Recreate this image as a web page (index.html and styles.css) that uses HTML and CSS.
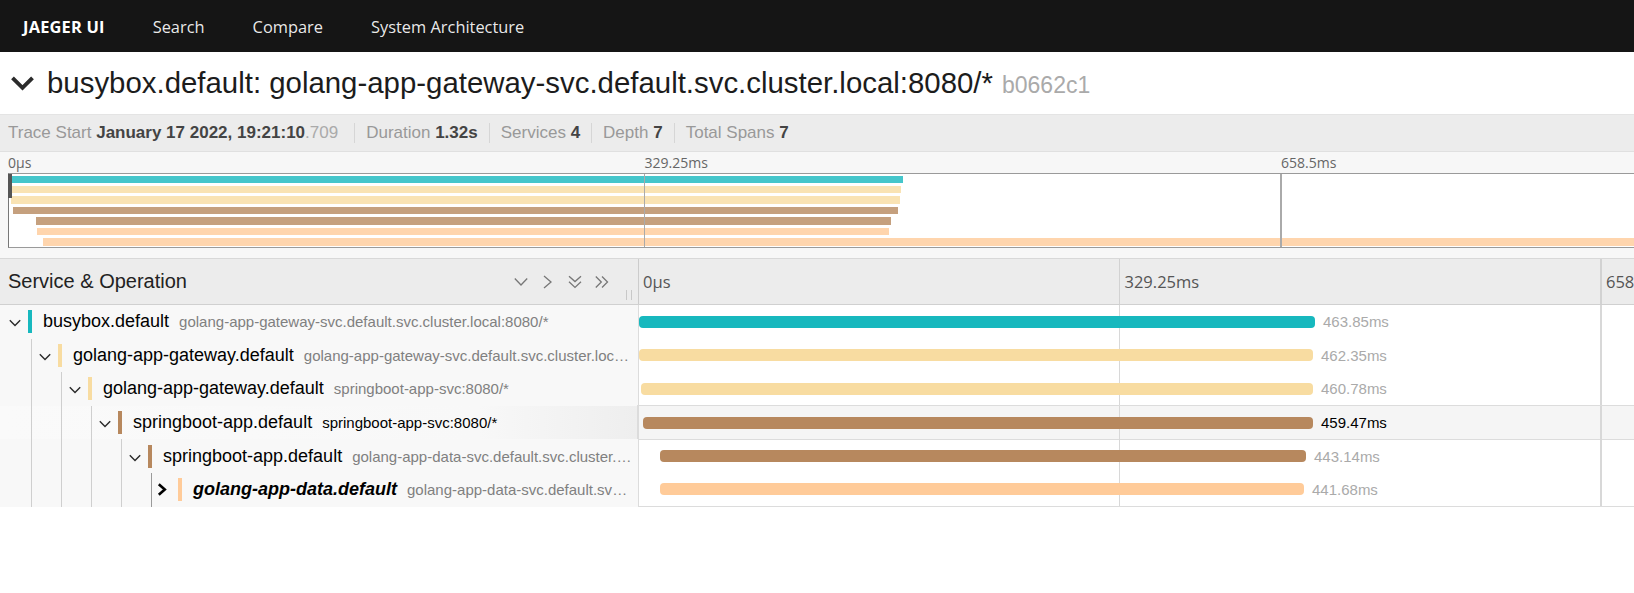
FILE: index.html
```html
<!DOCTYPE html>
<html lang="en">
<head>
<meta charset="utf-8">
<title>Jaeger UI</title>
<link rel="stylesheet" href="styles.css">
</head>
<body>
<nav class="topnav">
  <a class="brand">JAEGER UI</a>
  <a class="navlink">Search</a>
  <a class="navlink">Compare</a>
  <a class="navlink">System Architecture</a>
</nav>

<header class="trace-header">
  <div class="title-row">
    <svg class="title-toggle" width="25" height="17" viewBox="0 0 25 17"><path d="M2.5 2.8 L12.5 12.8 L22.5 2.8" fill="none" stroke="#2b2b2b" stroke-width="3.9"/></svg>
    <h1 class="trace-title">busybox.default: golang-app-gateway-svc.default.svc.cluster.local:8080/*<small class="trace-id">b0662c1</small></h1>
  </div>
  <ul class="overview">
    <li class="ov-item"><span class="ov-label">Trace Start</span> <strong class="ov-value">January 17 2022, 19:21:10</strong><span class="ov-ms">.709</span></li>
    <li class="ov-item"><span class="ov-label">Duration</span> <strong class="ov-value">1.32s</strong></li>
    <li class="ov-item"><span class="ov-label">Services</span> <strong class="ov-value">4</strong></li>
    <li class="ov-item"><span class="ov-label">Depth</span> <strong class="ov-value">7</strong></li>
    <li class="ov-item"><span class="ov-label">Total Spans</span> <strong class="ov-value">7</strong></li>
  </ul>
</header>

<section class="minimap">
  <div class="mm-ticks">
    <span class="mm-tick">0μs</span>
    <span class="mm-tick">329.25ms</span>
    <span class="mm-tick">658.5ms</span>
    <span class="mm-tick">987.75ms</span>
  </div>
  <div class="mm-canvas">
    <div class="mm-handle"></div>
    <div class="mm-row"><div class="mm-bar k-teal" style="margin-left:0px;width:894px"></div></div>
    <div class="mm-row"><div class="mm-bar k-yellow" style="margin-left:0px;width:892px"></div></div>
    <div class="mm-row"><div class="mm-bar k-yellow" style="margin-left:2px;width:889px"></div></div>
    <div class="mm-row"><div class="mm-bar k-brown" style="margin-left:4px;width:885px"></div></div>
    <div class="mm-row"><div class="mm-bar k-brown" style="margin-left:26.7px;width:855.7px"></div></div>
    <div class="mm-row"><div class="mm-bar k-peach" style="margin-left:28.1px;width:851.9px"></div></div>
    <div class="mm-row"><div class="mm-bar k-peach" style="margin-left:33.9px;width:2500px"></div></div>
  </div>
</section>

<section class="detail">
  <div class="detail-header">
    <div class="hdr-name">
      <h3 class="hdr-title">Service &amp; Operation</h3>
      <div class="hdr-tools">
        <svg class="tool" width="14" height="14" viewBox="0 0 14 14"><path d="M0.8 3.5 L7 10 L13.2 3.5"/></svg>
        <svg class="tool" width="14" height="14" viewBox="0 0 14 14"><path d="M3 1 L10 7 L3 13"/></svg>
        <svg class="tool" width="14" height="14" viewBox="0 0 14 14"><path d="M1 1.2 L7 6.6 L13 1.2 M1 6.8 L7 12.4 L13 6.8"/></svg>
        <svg class="tool" width="14" height="14" viewBox="0 0 14 14"><path d="M0.8 1.5 L6.3 7 L0.8 12.5 M7 1.5 L12.5 7 L7 12.5"/></svg>
      </div>
      <span class="hdr-resizer"></span>
    </div>
    <div class="hdr-ticks">
      <span class="hdr-tick">0μs</span>
      <span class="hdr-tick">329.25ms</span>
      <span class="hdr-tick">658.5ms</span>
      <span class="hdr-tick">987.75ms</span>
    </div>
  </div>

  <div class="rows">
    <div class="row k-teal">
      <div class="name-cell">
        <span class="toggle"><svg class="chev" width="12" height="8" viewBox="0 0 12 8"><path d="M0.8 1.2 L6 6.6 L11.2 1.2"/></svg></span>
        <span class="span-name"><span class="svc">busybox.default</span>golang-app-gateway-svc.default.svc.cluster.local:8080/*</span>
      </div>
      <div class="span-view"><span class="bar" style="margin-left:0px;width:676px"></span><span class="bar-label">463.85ms</span></div>
    </div>

    <div class="row k-yellow">
      <div class="name-cell">
        <span class="guide"></span>
        <span class="toggle"><svg class="chev" width="12" height="8" viewBox="0 0 12 8"><path d="M0.8 1.2 L6 6.6 L11.2 1.2"/></svg></span>
        <span class="span-name"><span class="svc">golang-app-gateway.default</span>golang-app-gateway-svc.default.svc.cluster.local:8080/*</span>
      </div>
      <div class="span-view"><span class="bar" style="margin-left:0px;width:674px"></span><span class="bar-label">462.35ms</span></div>
    </div>

    <div class="row k-yellow">
      <div class="name-cell">
        <span class="guide"></span><span class="guide"></span>
        <span class="toggle"><svg class="chev" width="12" height="8" viewBox="0 0 12 8"><path d="M0.8 1.2 L6 6.6 L11.2 1.2"/></svg></span>
        <span class="span-name"><span class="svc">golang-app-gateway.default</span>springboot-app-svc:8080/*</span>
      </div>
      <div class="span-view"><span class="bar" style="margin-left:2px;width:672px"></span><span class="bar-label">460.78ms</span></div>
    </div>

    <div class="row k-brown is-hovered">
      <div class="name-cell">
        <span class="guide"></span><span class="guide"></span><span class="guide"></span>
        <span class="toggle"><svg class="chev" width="12" height="8" viewBox="0 0 12 8"><path d="M0.8 1.2 L6 6.6 L11.2 1.2"/></svg></span>
        <span class="span-name"><span class="svc">springboot-app.default</span>springboot-app-svc:8080/*</span>
      </div>
      <div class="span-view"><span class="bar" style="margin-left:4px;width:670px"></span><span class="bar-label">459.47ms</span></div>
    </div>

    <div class="row k-brown">
      <div class="name-cell">
        <span class="guide"></span><span class="guide"></span><span class="guide"></span><span class="guide"></span>
        <span class="toggle"><svg class="chev" width="12" height="8" viewBox="0 0 12 8"><path d="M0.8 1.2 L6 6.6 L11.2 1.2"/></svg></span>
        <span class="span-name"><span class="svc">springboot-app.default</span>golang-app-data-svc.default.svc.cluster.local:8080/*</span>
      </div>
      <div class="span-view"><span class="bar" style="margin-left:21px;width:646px"></span><span class="bar-label">443.14ms</span></div>
    </div>

    <div class="row k-peach is-collapsed">
      <div class="name-cell">
        <span class="guide"></span><span class="guide"></span><span class="guide"></span><span class="guide"></span><span class="guide is-active"></span>
        <span class="toggle"><svg class="chev-right" width="10" height="13" viewBox="0 0 10 13"><path d="M1.8 1.2 L7.8 6.5 L1.8 11.8"/></svg></span>
        <span class="span-name"><span class="svc">golang-app-data.default</span>golang-app-data-svc.default.svc.cluster.local:8080/*</span>
      </div>
      <div class="span-view"><span class="bar" style="margin-left:21px;width:644px"></span><span class="bar-label">441.68ms</span></div>
    </div>
  </div>
</section>
</body>
</html>
```

FILE: styles.css
```css
* { box-sizing: border-box; }

html, body {
  margin: 0;
  padding: 0;
  overflow: hidden;
  background: #fff;
}

body {
  width: 1634px;
  height: 593px;
  font-family: "Liberation Sans", Arial, sans-serif;
  color: #000;
}

/* top navigation */
.topnav {
  display: flex;
  align-items: center;
  gap: 48px;
  height: 52px;
  padding-left: 23px;
  background: #151515;
  font-family: "Open Sans", "Liberation Sans", sans-serif;
  font-size: 16.4px;
}
.brand { color: #fff; font-weight: 700; letter-spacing: 0.2px; }
.navlink { color: rgba(255, 255, 255, 0.92); }

/* title */
.title-row {
  display: flex;
  align-items: center;
  height: 63px;
  padding-left: 10px;
  border-bottom: 1px solid #e4e4e4;
}
.title-toggle { flex: none; margin-right: 12px; margin-top: 1px; }
.trace-title {
  margin: 0;
  font-size: 29.4px;
  font-weight: normal;
  line-height: 1;
  color: #1c1c1c;
  white-space: nowrap;
}
.trace-id {
  margin-left: 9px;
  font-size: 23px;
  color: #aaa;
}

/* overview */
.overview {
  display: flex;
  align-items: center;
  height: 37px;
  margin: 0;
  padding: 0 0 0 8px;
  list-style: none;
  background: #ececec;
  border-bottom: 1px solid #e0e0e0;
  font-size: 17px;
  white-space: nowrap;
}
.ov-item {
  padding: 0 11px;
  line-height: 20px;
  border-left: 1px solid #d6d6d6;
}
.ov-item:first-child { padding-left: 0; padding-right: 16px; border-left: 0; }
.ov-label { color: #999; }
.ov-value { color: #444; font-weight: 700; }
.ov-ms { color: #aaa; }

/* minimap */
.minimap {
  background: #f7f7f7;
  overflow: hidden;
  padding-bottom: 10px;
}
.mm-ticks {
  display: flex;
  align-items: center;
  height: 21px;
  padding-left: 8px;
  font-family: "Open Sans", sans-serif;
  font-size: 14px;
  color: #666;
  white-space: nowrap;
}
.mm-tick { flex: none; width: 636.5px; }
.mm-canvas {
  position: relative;
  width: 2542px;
  height: 75px;
  margin-left: 8px;
  background: #fff;
  border: 1px solid #9a9a9a;
  border-left-color: #777;
}
.mm-canvas::after {
  content: "";
  position: absolute;
  inset: 0;
  background: repeating-linear-gradient(90deg, transparent 0 635px, #aaa 635px 636.5px);
  pointer-events: none;
}
.mm-handle {
  position: absolute;
  left: -1px;
  top: 0;
  width: 3.5px;
  height: 24px;
  background: #555;
  z-index: 1;
}
.mm-row { height: 10.43px; padding-top: 1.6px; }
.mm-bar { height: 7.4px; background: var(--c); opacity: 0.8; }

/* colours */
.k-teal { --c: #17b8be; }
.k-yellow { --c: #f8dca1; }
.k-brown { --c: #b7885e; }
.k-peach { --c: #ffcb99; }

/* detail header */
.detail-header {
  display: flex;
  height: 47px;
  background: #ececec;
  border-top: 1px solid #d8d8d8;
  border-bottom: 1px solid #d0d0d0;
  overflow: hidden;
}
.hdr-name {
  position: relative;
  flex: none;
  width: 638px;
  display: flex;
  align-items: center;
  justify-content: space-between;
  padding: 0 29px 0 8px;
}
.hdr-title {
  margin: 0;
  font-size: 20px;
  font-weight: normal;
  color: #222;
}
.hdr-tools { display: flex; align-items: center; gap: 13px; }
.tool path { fill: none; stroke: #777; stroke-width: 1.3; }
.hdr-resizer {
  position: absolute;
  right: 6px;
  bottom: 4px;
  width: 6px;
  height: 10px;
  border-left: 1px solid #c8c8c8;
  border-right: 1px solid #c8c8c8;
}
.hdr-ticks {
  flex: 1;
  min-width: 0;
  display: flex;
  border-left: 1px solid #ccc;
  background-image: repeating-linear-gradient(90deg, transparent 0 480px, #d2d2d2 480px 481.5px);
  white-space: nowrap;
}
.hdr-tick {
  flex: none;
  width: 481.5px;
  display: flex;
  align-items: center;
  padding-left: 4px;
  font-family: "Open Sans", sans-serif;
  font-size: 16.5px;
  color: #555;
}

/* rows */
.row { display: flex; height: 33.6px; }
.name-cell {
  flex: none;
  width: 638px;
  display: flex;
  align-items: center;
  padding-left: 2px;
  background: #f8f8f8;
}
.guide {
  flex: none;
  align-self: stretch;
  width: 30px;
  border-right: 1px solid #cfcfcf;
}
.guide.is-active { border-right-color: #9a9a9a; }
.toggle {
  flex: none;
  width: 26px;
  display: flex;
  justify-content: center;
  align-items: center;
}
.chev { margin-top: 3px; }
.chev path { fill: none; stroke: #2a2a2a; stroke-width: 1.4; }
.chev-right { margin-right: 6px; }
.chev-right path { fill: none; stroke: #000; stroke-width: 2.6; }
.span-name {
  flex: 1 1 auto;
  min-width: 0;
  margin-right: 6px;
  padding-left: 11px;
  border-left: 4px solid var(--c);
  overflow: hidden;
  white-space: nowrap;
  text-overflow: ellipsis;
  line-height: 23px;
  font-size: 15px;
  color: #808080;
}
.svc { margin-right: 10px; font-size: 18px; color: #000; }
.is-collapsed .svc { font-weight: 700; font-style: italic; }

.span-view {
  flex: 1;
  min-width: 0;
  display: flex;
  align-items: center;
  border-left: 1px solid #dcdcdc;
  background-image: repeating-linear-gradient(90deg, transparent 0 480px, #d8d8d8 480px 481.5px);
  overflow: hidden;
}
.row:last-child .span-view { border-bottom: 1px solid #dcdcdc; }
.bar {
  flex: none;
  height: 12px;
  border-radius: 4px;
  background: var(--c);
}
.bar-label {
  margin-left: 8px;
  font-size: 15px;
  color: #aaa;
  white-space: nowrap;
}

/* hovered row */
.row.is-hovered .name-cell { background: linear-gradient(90deg, #fafafa, #f8f8f8 75%, #eee); }
.row.is-hovered .span-view { background-color: #f5f5f5; outline: 1px solid #dcdcdc; }
.row.is-hovered .span-name,
.row.is-hovered .bar-label { color: #000; }
```
